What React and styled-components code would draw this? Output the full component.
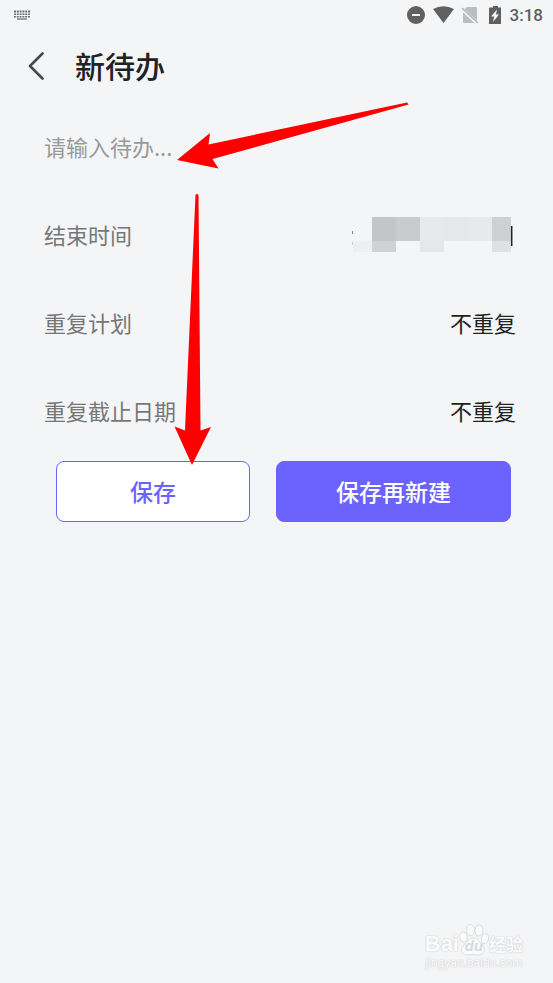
import React from "react";
import styled, { createGlobalStyle } from "styled-components";

const GlobalStyle = createGlobalStyle`
  * { box-sizing: border-box; }
  body {
    margin: 0;
    background: #f4f5f7;
    font-family: Roboto, "Noto Sans CJK SC", sans-serif;
  }
  button, input { font-family: inherit; }
`;

const Screen = styled.main`
  position: relative;
  min-height: 100vh;
  background: #f4f5f7;
  color: #222;
`;

const StatusBar = styled.div`
  display: flex;
  align-items: center;
  justify-content: space-between;
  height: 30px;
  padding: 0 10px 0 13px;
  color: #606060;
`;

const StatusIcons = styled.div`
  display: flex;
  align-items: center;
  gap: 7px;
`;

const Clock = styled.time`
  font-size: 17px;
  line-height: 22px;
  font-weight: 500;
`;

const Header = styled.header`
  display: flex;
  align-items: center;
  gap: 23px;
  height: 72px;
  padding: 0 22px;
`;

const BackButton = styled.button`
  display: flex;
  width: 30px;
  height: 36px;
  padding: 4px 0;
  border: 0;
  background: none;
  color: #484848;
`;

const Title = styled.h1`
  margin: 0;
  padding-bottom: 2px;
  font-family: "Noto Sans CJK SC", sans-serif;
  font-size: 30px;
  line-height: 40px;
  font-weight: 500;
`;

const Form = styled.form`
  display: flex;
  flex-direction: column;
`;

const Row = styled.div`
  display: flex;
  align-items: center;
  justify-content: space-between;
  height: 88px;
  padding: 0 37px 0 44px;
  font-family: "Noto Sans CJK SC", sans-serif;
  font-size: 22px;
  line-height: 32px;
`;

const TodoInput = styled.input`
  width: 100%;
  padding: 0;
  border: 0;
  outline: 0;
  background: transparent;
  font-size: 22px;
  line-height: 32px;
  color: #222;
  &::placeholder { color: #999; opacity: 1; }
`;

const Label = styled.span`
  color: #777;
`;

const ValueButton = styled.button`
  display: flex;
  padding: 0;
  border: 0;
  background: none;
  font-size: 22px;
  line-height: 32px;
  color: #222;
`;

const DateButton = styled(ValueButton)`
  margin-right: 3px;
`;

const Actions = styled.div`
  display: flex;
  gap: 26px;
  padding: 7px 42px 0 56px;
`;

const ActionButton = styled.button`
  flex: ${(p) => (p.$primary ? 235 : 194)} 1 0;
  height: 61px;
  padding: 0 0 2px;
  border: 1px solid #6c63ff;
  border-radius: 8px;
  background: ${(p) => (p.$primary ? "#6c63ff" : "#fff")};
  color: ${(p) => (p.$primary ? "#fff" : "#6c63ff")};
  font-family: "Noto Sans CJK SC", sans-serif;
  font-size: 23px;
  line-height: 34px;
  font-weight: 500;
`;

const Arrows = styled.svg`
  position: absolute;
  top: 0;
  left: 0;
  pointer-events: none;
`;

const Watermark = styled.div`
  position: absolute;
  right: 30px;
  bottom: 13px;
  display: flex;
  flex-direction: column;
  align-items: center;
  color: #fbfbfc;
  text-shadow: 0 0 1px #c8c9ca, 0 0 2px #d4d5d6;
`;

const Brand = styled.div`
  display: flex;
  align-items: flex-end;
  height: 34px;
  font-family: "Liberation Sans", "Noto Sans CJK SC", sans-serif;
  font-size: 22px;
  line-height: 24px;
  font-weight: 700;
`;

const BrandChinese = styled.span`
  font-family: "Noto Sans CJK SC", sans-serif;
  font-size: 17px;
  line-height: 24px;
`;

const PawBox = styled.span`
  position: relative;
  display: flex;
  width: 30px;
  height: 34px;
`;

const PawText = styled.span`
  position: absolute;
  left: 0;
  right: 0;
  bottom: 1px;
  text-align: center;
  font-size: 15px;
  line-height: 18px;
  font-style: italic;
  color: #d9dadc;
  text-shadow: none;
`;

const Site = styled.span`
  font-family: "Liberation Sans", sans-serif;
  font-size: 12px;
  line-height: 14px;
`;

function KeyboardIcon() {
  return (
    <svg width="18" height="10" viewBox="0 0 18 10" fill="none" stroke="#707070" aria-hidden="true">
      <path d="M1 1.5h17" strokeWidth="2" strokeDasharray="2 .8" />
      <path d="M1 4.2h16" strokeWidth="1.6" strokeDasharray="2 .8" />
      <path d="M1 6.7h16" strokeWidth="1.6" strokeDasharray="2 .8" />
      <path d="M4 9h10" strokeWidth="1.3" />
    </svg>
  );
}

function SystemIcons() {
  return (
    <svg width="96" height="20" viewBox="0 0 96 20" aria-hidden="true">
      <circle cx="9" cy="10" r="9" fill="#606060" />
      <path d="M5 10h8" stroke="#f4f5f7" strokeWidth="2" />
      <path d="M26 4Q36.500-1.500 47 4L36.500 18Z" fill="#606060" />
      <path d="M60 2h9q1 0 1 1v14q0 1-1 1H57q-1 0-1-1V6Z" fill="#bcbdbe" />
      <path d="M55 4L71 19" stroke="#f4f5f7" strokeWidth="3.500" />
      <path d="M55 3L71 18" stroke="#b5b6b7" strokeWidth="1.600" />
      <path d="M83 2.500h3V1h5v1.500h3V19H82V3.500q0-1 1-1Z" fill="#606060" />
      <path d="M90 4.500l-6 7h3.200L86 17l6-7.500h-3Z" fill="#f4f5f7" />
    </svg>
  );
}

const mosaic = [
  [20, 0, 24, 24, "#c4c5c7"],
  [44, 0, 24, 24, "#cacbcd"],
  [68, 0, 24, 24, "#e8e9eb"],
  [92, 0, 24, 24, "#e6e7e9"],
  [116, 0, 24, 24, "#e8e9eb"],
  [140, 0, 19, 24, "#cfd0d2"],
  [1, 24, 19, 11, "#eeeff1"],
  [20, 24, 24, 11, "#d0d1d3"],
  [68, 24, 24, 11, "#e6e7e9"],
  [140, 24, 19, 11, "#dfe0e2"],
];

function HiddenDate() {
  return (
    <svg width="161" height="35" viewBox="0 0 161 35" aria-hidden="true">
      {mosaic.map(([x, y, w, h, fill]) => (
        <rect key={`${x}-${y}`} x={x} y={y} width={w} height={h} fill={fill} />
      ))}
      <path d="M.5 14v3" stroke="#888" />
      <path d="M.5 25v3" stroke="#ccc" />
      <path d="M159.700 9v20" stroke="#222" strokeWidth="1.500" />
    </svg>
  );
}

function Paw() {
  return (
    <svg width="30" height="34" viewBox="0 0 30 34" fill="#fafbfb" stroke="#dcddde" aria-hidden="true">
      <ellipse cx="4.500" cy="15" rx="3.800" ry="5" transform="rotate(-12 4.500 15)" />
      <ellipse cx="11.500" cy="8" rx="4" ry="5.500" />
      <ellipse cx="20" cy="8.500" rx="4" ry="5.500" transform="rotate(8 20 8.500)" />
      <ellipse cx="26" cy="16.500" rx="3.500" ry="5" transform="rotate(14 26 16.500)" />
      <path d="M15 16c4 0 5 4 8 7 4 3 3 10-3 10-3 0-7-1-11 0-6 0-9-6-4-10 4-3 5-7 10-7Z" />
    </svg>
  );
}

export default function App() {
  return (
    <>
      <GlobalStyle />
      <Screen>
        <StatusBar>
          <KeyboardIcon />
          <StatusIcons>
            <SystemIcons />
            <Clock>3:18</Clock>
          </StatusIcons>
        </StatusBar>
        <Header>
          <BackButton type="button" aria-label="返回">
            <svg width="30" height="28" viewBox="0 0 30 28" fill="none" stroke="currentColor" strokeWidth="2.600" strokeLinecap="round" strokeLinejoin="round">
              <path d="M20.500 1.500L8 14l12.500 12.500" />
            </svg>
          </BackButton>
          <Title>新待办</Title>
        </Header>
        <Form onSubmit={(e) => e.preventDefault()}>
          <Row>
            <TodoInput type="text" aria-label="待办" placeholder="请输入待办..." />
          </Row>
          <Row>
            <Label id="end-time">结束时间</Label>
            <DateButton type="button" aria-labelledby="end-time">
              <HiddenDate />
            </DateButton>
          </Row>
          <Row>
            <Label id="repeat-plan">重复计划</Label>
            <ValueButton type="button" aria-describedby="repeat-plan">不重复</ValueButton>
          </Row>
          <Row>
            <Label id="repeat-until">重复截止日期</Label>
            <ValueButton type="button" aria-describedby="repeat-until">不重复</ValueButton>
          </Row>
          <Actions>
            <ActionButton type="submit">保存</ActionButton>
            <ActionButton type="button" $primary>保存再新建</ActionButton>
          </Actions>
        </Form>
        <Arrows width="420" height="480" viewBox="0 0 420 480" fill="#f00" aria-hidden="true">
          <path d="M177 160L210 133L208.500 144.500L407 102.500L408.500 104.500L212.500 159L218.500 168.500Z" />
          <path d="M195.500 195Q197 193 198.500 195L200.500 430.500L211 427L192 465L174.500 426.500L185 430.500Z" />
        </Arrows>
        <Watermark>
          <Brand>
            <span>Bai</span>
            <PawBox>
              <Paw />
              <PawText>du</PawText>
            </PawBox>
            <BrandChinese>经验</BrandChinese>
          </Brand>
          <Site>jingyan.baidu.com</Site>
        </Watermark>
      </Screen>
    </>
  );
}
